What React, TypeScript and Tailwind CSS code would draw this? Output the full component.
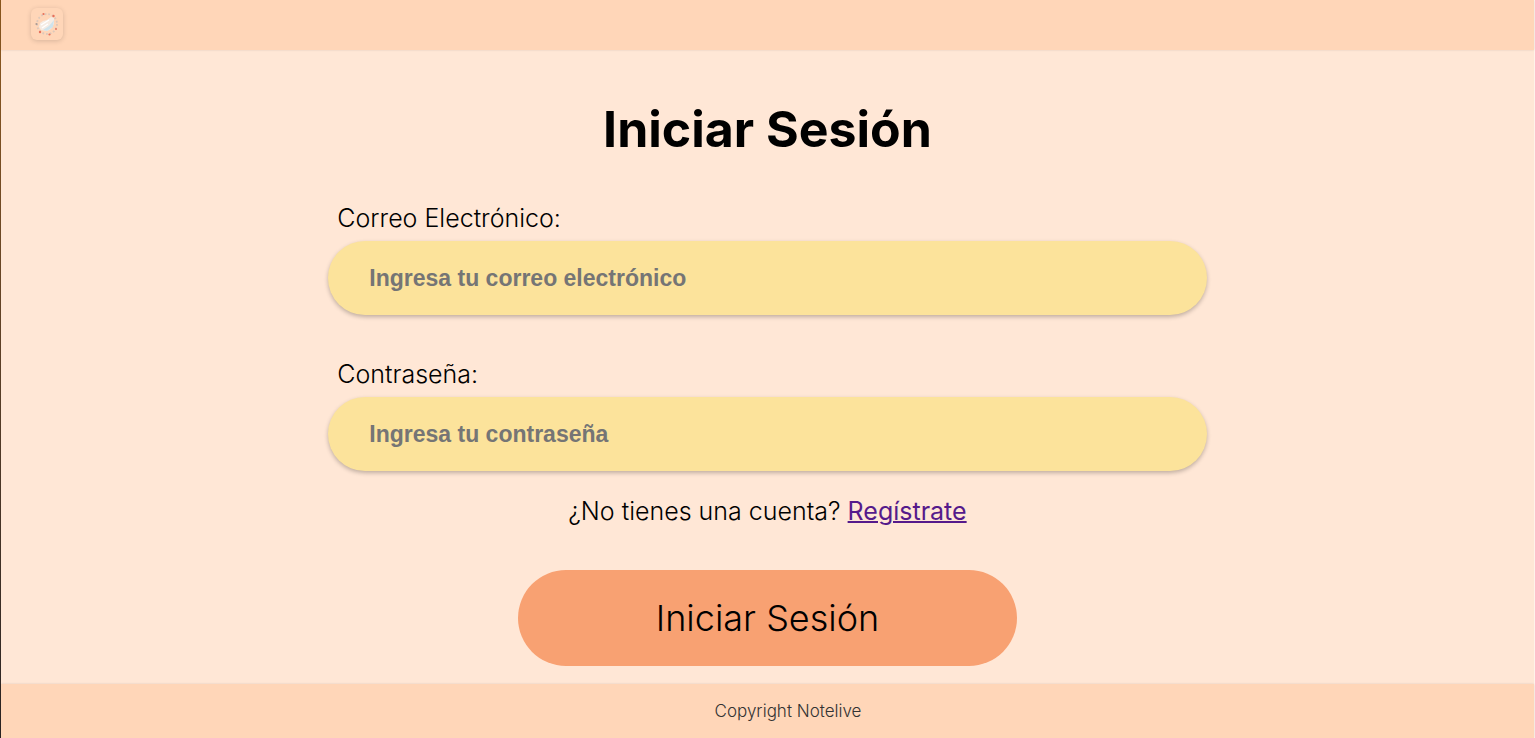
import React from "react";

function Logo() {
  return (
    <svg viewBox="0 0 24 24" className="size-6" aria-hidden="true">
      <circle cx="12" cy="12" r="10" fill="none" stroke="#dcc8bb" strokeWidth="1.8" strokeDasharray="1.8 1.9" />
      <path d="M5 11 L8 9 L12 8 L16 5 L19 6 L19 12 L16 17 L12 19 L6 18 L4 15 Z" fill="#f5ece4" />
      <path d="M19 8 L18 15 L12 19 L8 18 L14 14 Z" fill="#cfe3ec" />
      <path d="M6 13 L14 8 M7 16 L13 12" stroke="#ffffff" strokeWidth="1.4" />
      <g fill="#e8705a">
        <circle cx="8.500" cy="2" r="1.100" />
        <circle cx="18.500" cy="4" r="1.200" />
        <circle cx="5" cy="20" r="1.200" />
        <circle cx="14.500" cy="22.500" r="1.100" />
        <circle cx="21" cy="17" r="0.900" />
      </g>
      <circle cx="1.500" cy="12" r="1.100" fill="#a99a94" />
    </svg>
  );
}

type FieldProps = { id: string; label: string; type: string; placeholder: string };

function Field({ id, label, type, placeholder }: FieldProps) {
  return (
    <div className="flex flex-col gap-[7px]">
      <label htmlFor={id} className="px-[9px] text-[25px] leading-8 font-light">
        {label}
      </label>
      <input
        id={id}
        type={type}
        placeholder={placeholder}
        className="w-full rounded-full bg-[#fce39b] px-[41px] py-5 font-['Liberation_Sans',Arial,sans-serif] text-[23px] leading-[34px] font-bold shadow-[0_2px_4px_rgba(0,0,0,0.25)] outline-none placeholder:text-[#757575]"
      />
    </div>
  );
}

export default function App() {
  return (
    <div className="flex min-h-screen bg-[#ffe7d6] font-['Inter',sans-serif] text-black">
      <div className="w-px shrink-0 bg-linear-to-b from-[#8f5a1e] to-[#2a2424]" />
      <div className="flex flex-1 flex-col border-r border-[#fff3ea]">
        <header className="flex bg-[#ffd6b8] px-[30px] pt-2 pb-[10px] shadow-[0_0_2px_rgba(0,0,0,0.12)]">
          <a
            href="#"
            aria-label="Notelive"
            className="flex size-8 items-center justify-center rounded-md bg-[#ffd6b8] shadow-[0_1px_5px_rgba(0,0,0,0.16)]"
          >
            <Logo />
          </a>
        </header>

        <main className="flex flex-1 flex-col items-center pt-[49px] pb-[18px]">
          <h1 className="text-[50px] leading-[60px] font-bold">Iniciar Sesión</h1>
          <form className="flex w-full flex-col items-center pt-[43px]" onSubmit={(e) => e.preventDefault()}>
            <div className="flex w-[57.3%] flex-col gap-[43px]">
              <Field id="email" label="Correo Electrónico:" type="email" placeholder="Ingresa tu correo electrónico" />
              <Field id="password" label="Contraseña:" type="password" placeholder="Ingresa tu contraseña" />
            </div>
            <p className="pt-6 text-[25px] leading-8 font-light">
              ¿No tienes una cuenta?{" "}
              <a href="#" className="font-normal text-[#551a8b] underline decoration-2">
                Regístrate
              </a>
            </p>
            <button type="submit" className="mt-[43px] w-[32.5%] rounded-full bg-[#f8a172] py-6 text-4xl leading-[48px] font-light">
              Iniciar Sesión
            </button>
          </form>
        </main>

        <footer className="bg-[#ffd6b8] py-[15px] pl-[41px] text-center text-[17px] leading-6 font-light text-[#333333] shadow-[0_0_2px_rgba(0,0,0,0.12)]">
          Copyright Notelive
        </footer>
      </div>
    </div>
  );
}
